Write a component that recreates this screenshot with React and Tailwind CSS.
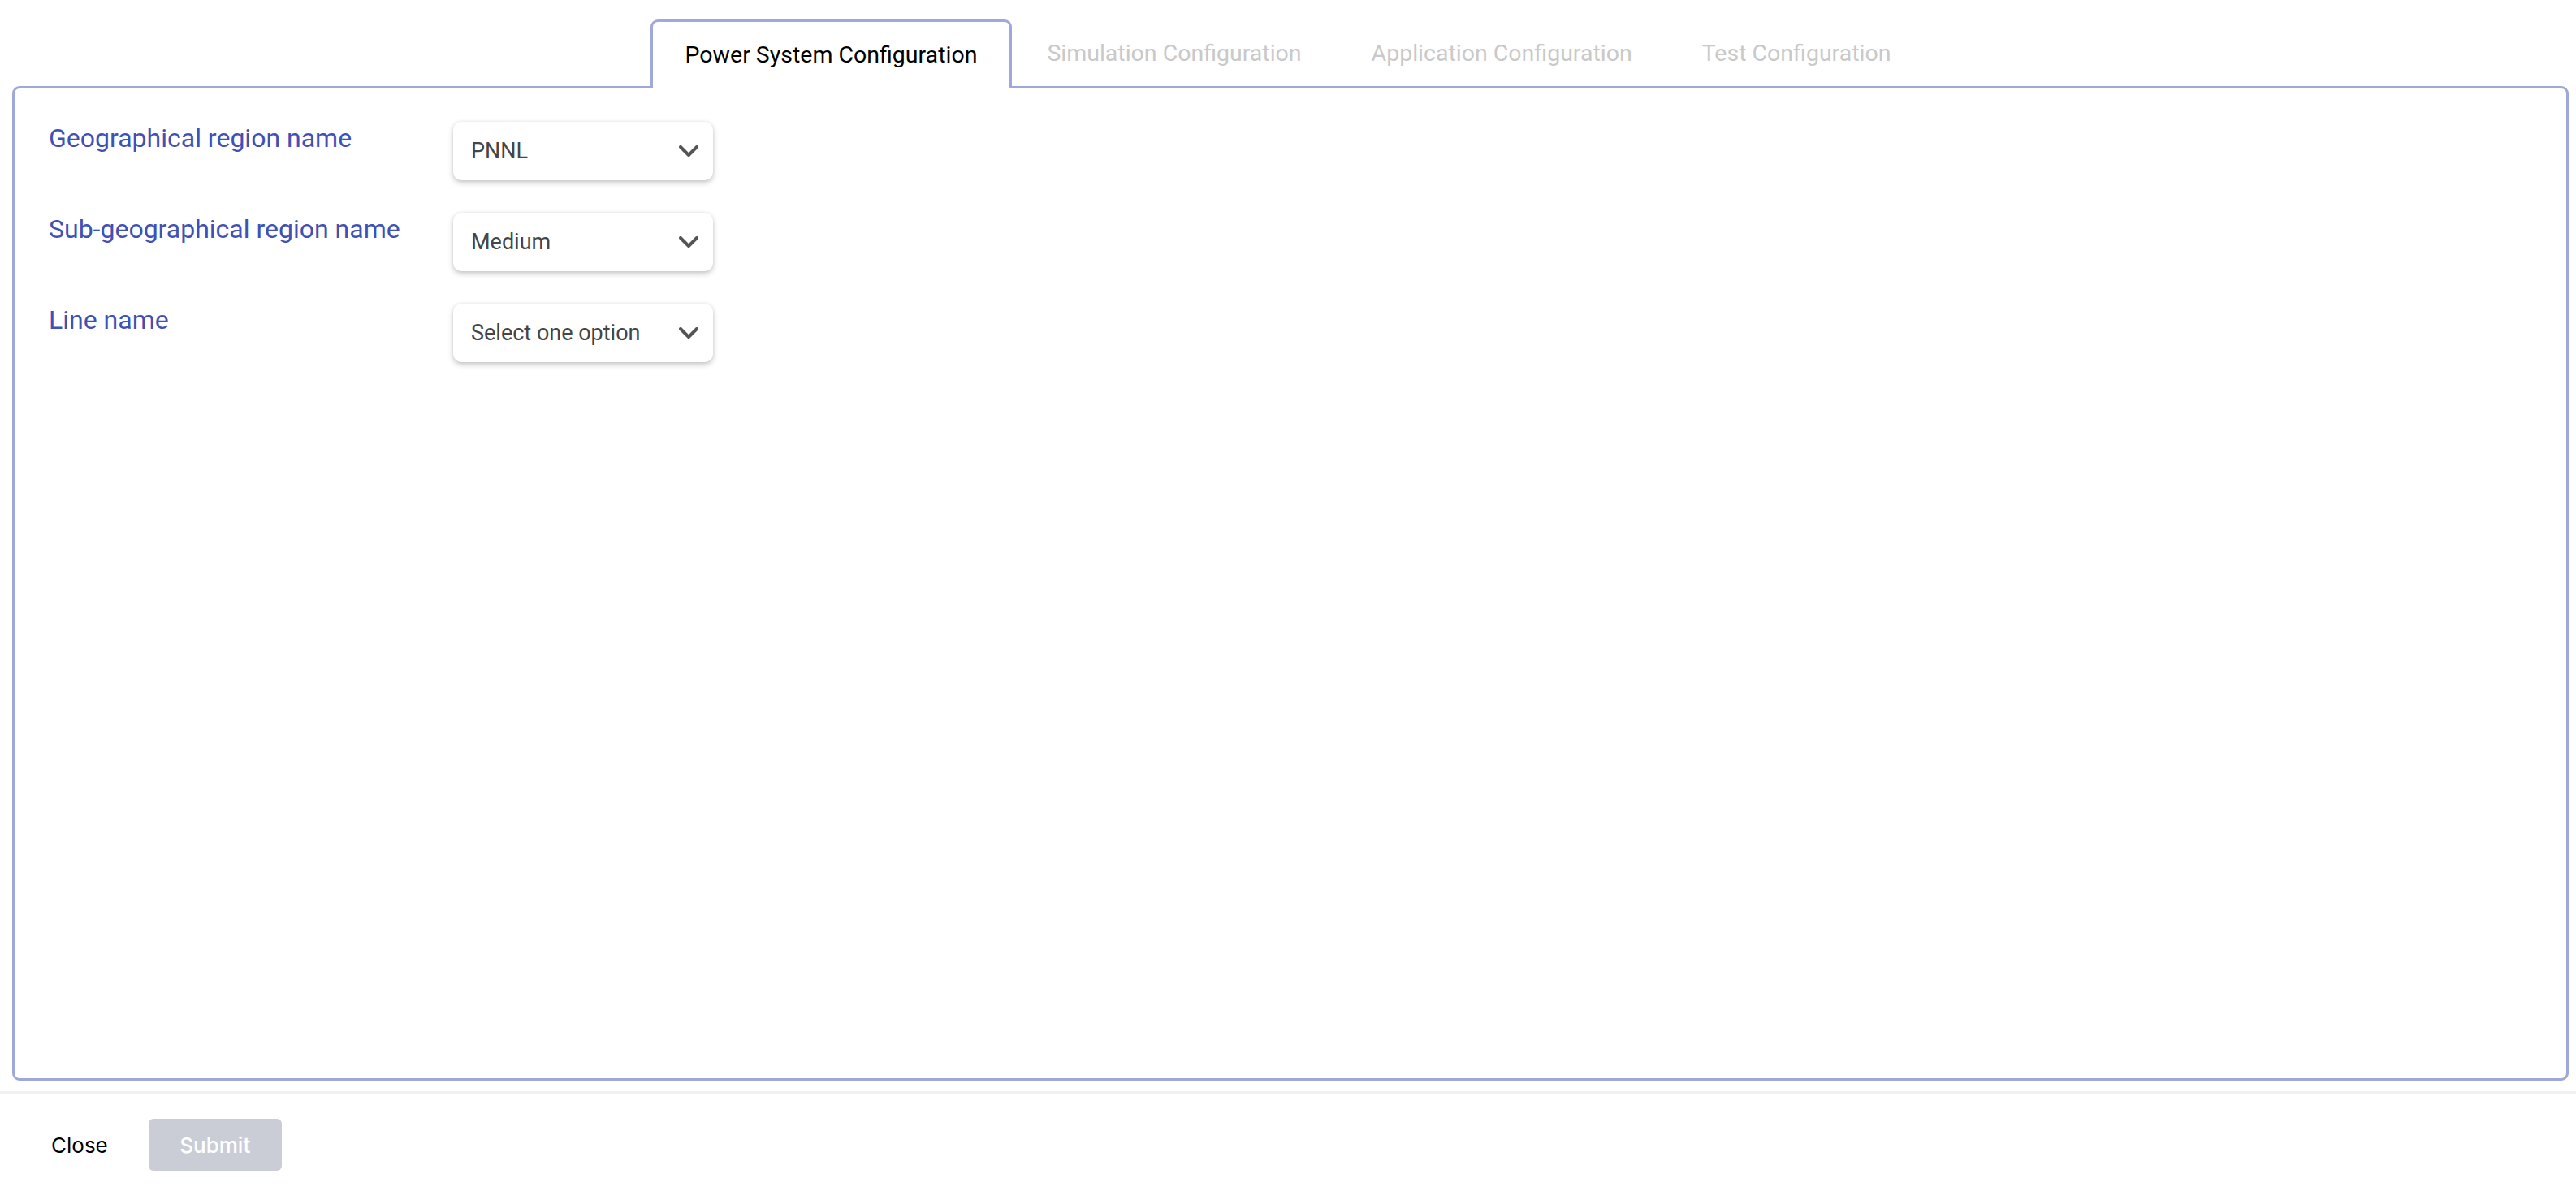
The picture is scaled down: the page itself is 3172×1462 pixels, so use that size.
const tabs = [
  "Power System Configuration",
  "Simulation Configuration",
  "Application Configuration",
  "Test Configuration",
];

const fields = [
  { label: "Geographical region name", value: "PNNL" },
  { label: "Sub-geographical region name", value: "Medium" },
  { label: "Line name", value: "Select one option" },
];

function Chevron() {
  return (
    <svg width="24" height="15" viewBox="0 0 24 15" fill="none">
      <polyline
        points="2,2 12,12 22,2"
        stroke="#555"
        strokeWidth="4"
        strokeLinecap="round"
        strokeLinejoin="round"
      />
    </svg>
  );
}

function SelectBox({ value }) {
  return (
    <div className="w-[320px] h-[72px] bg-white rounded-[10px] shadow-[0_3px_7px_rgba(0,0,0,0.22),0_0_4px_rgba(0,0,0,0.06)] flex items-center justify-between pl-[22px] pr-[18px] cursor-pointer">
      <span className="text-[27px] text-[#454545]">{value}</span>
      <Chevron />
    </div>
  );
}

export default function App() {
  return (
    <div className="w-full h-screen bg-white flex flex-col font-['Roboto',sans-serif]">
      <div className="flex justify-center pt-[24px]">
        {tabs.map((t, i) => (
          <div
            key={t}
            className={
              i === 0
                ? "relative z-10 -mb-[3px] h-[85px] px-[40px] flex items-center border-[3px] border-b-0 border-[#9fa8da] rounded-t-[9px] bg-white text-[28.5px] text-black"
                : "h-[82px] px-[40px] flex items-center border-[3px] border-b-0 border-transparent text-[28.5px] text-[#c9c9c9]"
            }
          >
            {t}
          </div>
        ))}
      </div>

      <div className="ml-[15px] mr-[9px] h-[1225px] border-[3px] border-[#9fa8da] rounded-[9px] pl-[42px] pt-[41px]">
        <div className="flex flex-col gap-[40px]">
          {fields.map((f) => (
            <div key={f.label} className="flex items-start">
              <div className="w-[498px] text-[32px] leading-[40px] text-[#3f51b5]">
                {f.label}
              </div>
              <SelectBox value={f.value} />
            </div>
          ))}
        </div>
      </div>

      <div className="mt-[13px] h-[3px] bg-[#f1f1f1]" />

      <div className="flex items-center pl-[63px] pt-[31px] gap-[50px] font-['Inter',sans-serif]">
        <button className="text-[26px] text-black">Close</button>
        <button className="w-[164px] h-[64px] rounded-[6px] bg-[#cbcdd6] text-white text-[26px] font-medium">
          Submit
        </button>
      </div>
    </div>
  );
}
